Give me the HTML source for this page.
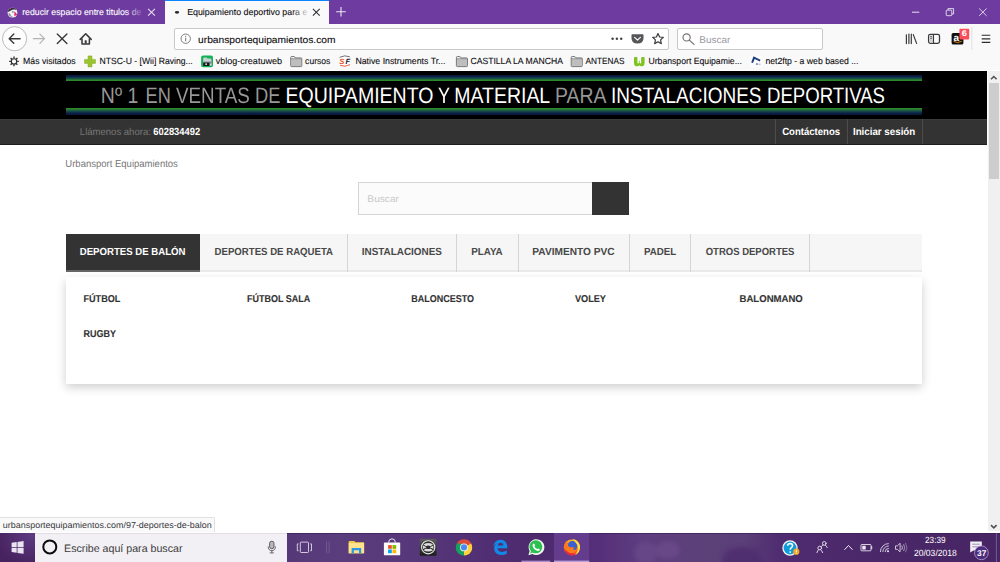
<!DOCTYPE html>
<html>
<head>
<meta charset="utf-8">
<title>Equipamiento deportivo</title>
<style>
*{box-sizing:border-box;margin:0;padding:0}
html,body{width:1000px;height:562px;overflow:hidden;background:#fff;font-family:"Liberation Sans",sans-serif;}
body{position:relative}
.a{position:absolute}
.t{position:absolute;white-space:nowrap;text-rendering:geometricPrecision}
.hv{-webkit-text-stroke:0.1px currentColor}
.hb{-webkit-text-stroke:0.12px currentColor}
svg{position:absolute;overflow:visible;text-rendering:geometricPrecision}
/* ---------- browser chrome ---------- */
#tabbar{left:0;top:0;width:1000px;height:24px;background:#6e3ba0}
#tab2{left:164.8px;top:0;width:164.3px;height:24px;background:#f9f9fa;border-top:1.7px solid #0a84ff}
#navbar{left:0;top:24px;width:1000px;height:28px;background:#f9f9fa}
#urlbar{left:174px;top:28px;width:495px;height:22px;background:#fff;border:1px solid #c9c9cc;border-radius:2px}
#srchbar{left:677px;top:28px;width:146px;height:22px;background:#fff;border:1px solid #c9c9cc;border-radius:2px}
#bmbar{left:0;top:52px;width:1000px;height:19px;background:#f9f9fa;border-bottom:1.1px solid #fff}
/* ---------- page ---------- */
#banner{left:0;top:70.9px;width:987.4px;height:48px;background:#000}
.stripe{left:66px;width:856px;height:7px}
#topbar{left:0;top:118.8px;width:987.4px;height:26.6px;background:#333;border-top:1px solid #3b3b3b;border-bottom:1.4px solid #1e1e1e}
.vsep{top:118.8px;width:1px;height:25.2px;background:#4c4c4c}
#scroll{left:988.3px;top:70.7px;width:11.7px;height:460px;background:#f0f0f0}
#thumb{left:989.3px;top:83.2px;width:9.7px;height:96.3px;background:#cdcdcd}
#sinput{left:358px;top:182px;width:235px;height:33px;background:#fbfbfb;border:1px solid #d6d4d4}
#sbtn{left:592px;top:182px;width:37px;height:33px;background:#333}
#menu{left:66px;top:233.8px;width:856px;height:38px;background:#f6f6f6;border-bottom:2.2px solid #e9e9e9}
#menu1{left:66px;top:233.8px;width:134px;height:38px;background:#333;border-bottom:2.2px solid #666}
.msep{top:233.8px;width:1px;height:38px;background:#d6d4d4}
#submenu{left:66px;top:276.5px;width:856px;height:107.4px;background:#fff;box-shadow:0 3.7px 9.5px rgba(0,0,0,.2)}
/* ---------- status + taskbar ---------- */
#status{left:0;top:517px;width:215px;height:15.4px;background:#f9f9fa;border-top:1px solid #e0e0e3;border-right:1px solid #e0e0e3;border-top-right-radius:2px}
#taskbar{left:0;top:533px;width:1000px;height:29px;background:#4b2769}
#cortana{left:35px;top:533px;width:252px;height:29px;background:#f1eff4}
</style>
</head>
<body>
<!-- TAB BAR -->
<div id="tabbar" class="a"></div>
<div id="tab2" class="a"></div>
<!-- NAV BAR -->
<div id="navbar" class="a"></div>
<div id="urlbar" class="a"></div>
<div id="srchbar" class="a"></div>
<!-- BOOKMARKS -->
<div id="bmbar" class="a"></div>
<!--CHROMEICONS--><svg class="a" style="left:0;top:0" width="1000" height="72" viewBox="0 0 1000 72">
 <!-- tab1 favicon (puffin) -->
 <g>
  <circle cx="12.5" cy="12.7" r="4.9" fill="#f4f2f6"/>
  <path d="M7.7 12 A4.9 4.9 0 0 1 16.6 10 Q13.5 8.6 11 10.4 Q9 11.6 7.7 12Z" fill="#3a3340"/>
  <path d="M14.3 11.2 L17.3 14.6 L14.4 16.2Z" fill="#e8245e"/>
  <path d="M8.2 13.5 Q9.5 17.6 13.4 17.3 Q10.6 16.4 9.8 13.2Z" fill="#8b8791"/>
  <circle cx="12.9" cy="11.9" r="0.7" fill="#333"/>
 </g>
 <!-- tab1 fade -->
 <defs><linearGradient id="fd1" x1="0" x2="1"><stop offset="0" stop-color="#6e3ba0" stop-opacity="0"/><stop offset="1" stop-color="#6e3ba0" stop-opacity=".85"/></linearGradient>
 <linearGradient id="fd2" x1="0" x2="1"><stop offset="0" stop-color="#f9f9fa" stop-opacity="0"/><stop offset="1" stop-color="#f9f9fa" stop-opacity=".9"/></linearGradient></defs>
 <!-- tab close buttons -->
 <path d="M148.1 8.9 L154.9 15.7 M154.9 8.9 L148.1 15.7" stroke="#e6def0" stroke-width="1.05" fill="none"/>
 <path d="M312.9 8.9 L319.7 15.7 M319.7 8.9 L312.9 15.7" stroke="#2d2d2f" stroke-width="1.05" fill="none"/>
 <!-- loading dot -->
 <ellipse cx="177" cy="12.3" rx="2.2" ry="1.4" fill="#2a2a2e"/>
 <!-- new tab plus -->
 <path d="M336.2 11.8 H345.8 M341 7 V16.6" stroke="#ece6f3" stroke-width="1.1" fill="none"/>
 <!-- window controls -->
 <path d="M912 12.2 H919.3" stroke="#e9e2f1" stroke-width="1" fill="none"/>
 <rect x="946.2" y="10.1" width="5.6" height="5.6" rx="0.8" fill="none" stroke="#e9e2f1" stroke-width="0.9"/>
 <path d="M948 10.1 V8.6 H953.6 V14 H951.8" fill="none" stroke="#e9e2f1" stroke-width="0.9"/>
 <path d="M979.2 8.5 L986.6 15.9 M986.6 8.5 L979.2 15.9" stroke="#e9e2f1" stroke-width="0.9" fill="none"/>
 <!-- back -->
 <circle cx="14.6" cy="38.7" r="12.1" fill="#fdfdfd" stroke="#b3b3b6" stroke-width="0.9"/>
 <path d="M20.1 38.7 H9.4 M13.8 34.1 L9.2 38.7 L13.8 43.3" stroke="#3a3a3d" stroke-width="1.4" fill="none" stroke-linecap="round" stroke-linejoin="round"/>
 <!-- forward -->
 <path d="M33.4 38.7 H44.3 M39.9 34.1 L44.5 38.7 L39.9 43.3" stroke="#b4b4b7" stroke-width="1.2" fill="none" stroke-linecap="round" stroke-linejoin="round"/>
 <!-- stop X -->
 <path d="M57.3 33.9 L66.9 43.5 M66.9 33.9 L57.3 43.5" stroke="#3a3a3d" stroke-width="1.4" fill="none" stroke-linecap="round"/>
 <!-- home -->
 <path d="M80.2 39.4 L85.7 33.7 L91.2 39.4" stroke="#3a3a3d" stroke-width="1.55" fill="none" stroke-linecap="round" stroke-linejoin="round"/>
 <path d="M82 38.6 V44 H89.4 V38.6" stroke="#3a3a3d" stroke-width="1.55" fill="none" stroke-linejoin="round"/>
 <rect x="84.7" y="40.3" width="2" height="3.2" fill="#3a3a3d"/>
 <!-- info -->
 <circle cx="185.7" cy="38.7" r="4.7" fill="none" stroke="#6f6f73" stroke-width="0.9"/>
 <rect x="185.2" y="37.7" width="1" height="3.6" fill="#6f6f73"/><rect x="185.2" y="35.8" width="1" height="1.1" fill="#6f6f73"/>
 <!-- page actions dots -->
 <circle cx="612.6" cy="38.8" r="1.25" fill="#45454a"/><circle cx="616.9" cy="38.8" r="1.25" fill="#45454a"/><circle cx="621.2" cy="38.8" r="1.25" fill="#45454a"/>
 <!-- pocket -->
 <path d="M632.2 34.3 H642.8 Q643.5 34.3 643.5 35 V38 Q643.5 43.6 637.5 43.6 Q631.5 43.6 631.5 38 V35 Q631.5 34.3 632.2 34.3Z" fill="#55555a"/>
 <path d="M634.6 37.4 L637.5 40.2 L640.4 37.4" stroke="#fff" stroke-width="1.15" fill="none" stroke-linecap="round" stroke-linejoin="round"/>
 <!-- star -->
 <path d="M658 33.6 L659.6 37 L663.3 37.4 L660.6 39.9 L661.3 43.6 L658 41.8 L654.7 43.6 L655.4 39.9 L652.7 37.4 L656.4 37Z" fill="none" stroke="#3a3a3d" stroke-width="1.2" stroke-linejoin="round"/>
 <!-- search magnifier -->
 <circle cx="686.6" cy="37.4" r="3.6" fill="none" stroke="#727276" stroke-width="1.15"/>
 <path d="M689.3 40.1 L694 44.4" stroke="#727276" stroke-width="1.25" stroke-linecap="round"/>
 <!-- library -->
 <path d="M906.4 34.8 V43.6 M908.9 34 V43.6 M911.3 34 V43.6 M913.3 34.6 L916.6 43.4" stroke="#3a3a3d" stroke-width="1.2" fill="none" stroke-linecap="round"/>
 <!-- sidebar -->
 <rect x="928.6" y="34.3" width="10.9" height="9" rx="1.7" fill="none" stroke="#3a3a3d" stroke-width="1.3"/><rect x="929.6" y="35.3" width="3.6" height="7" fill="#d4d4d6"/>
 <path d="M933.5 34.4 V43.2" stroke="#3a3a3d" stroke-width="1.1"/><path d="M930.2 36.6 H932 M930.2 38.3 H932" stroke="#3a3a3d" stroke-width="0.7"/>
 <!-- amazon -->
 <rect x="951.6" y="33" width="11.8" height="11.6" rx="1.6" fill="#111"/>
 <path d="M954 41.6 Q957.6 43.7 961.4 41.5" stroke="#f90" stroke-width="0.9" fill="none" stroke-linecap="round"/>
 <text x="953.6" y="41.2" font-family="Liberation Sans" font-weight="700" font-size="10" fill="#fff">a</text>
 <rect x="959.4" y="28.7" width="9.8" height="10.7" rx="0.8" fill="#fb4d5b"/>
 <!-- separator + hamburger -->
 <path d="M971.8 27 V50" stroke="#dcdcde" stroke-width="0.8"/>
 <path d="M981.7 35.2 H990.3 M981.7 38.8 H990.3 M981.7 42.4 H990.3" stroke="#2d2d30" stroke-width="1.15" fill="none"/>
 <!-- bookmarks icons -->
 <!-- gear -->
 <g stroke="#2c2c2f" fill="none">
  <circle cx="14" cy="61.4" r="2.7" stroke-width="1.15"/>
  <path d="M14 56.6 V58.3 M14 64.5 V66.2 M9.2 61.4 H10.9 M17.1 61.4 H18.8 M10.6 58 L11.8 59.2 M16.2 63.6 L17.4 64.8 M17.4 58 L16.2 59.2 M11.8 63.6 L10.6 64.8" stroke-width="1.35"/>
 </g>
 <!-- green plus -->
 <path d="M88 55.9 H92 V59.4 H95.5 V63.4 H92 V66.9 H88 V63.4 H84.5 V59.4 H88Z" fill="#9cc332" stroke="#86ab25" stroke-width="0.5" stroke-linejoin="round"/>
 <!-- vblog icon -->
 <rect x="201.1" y="55.5" width="11.9" height="11.8" rx="2" fill="#14b257"/>
 <path d="M203.2 58.2 Q203.2 57.4 204 57.4 H206.6 L207.6 58.4 H210.6 Q211.4 58.4 211.4 59.2 V65.4 H203.2Z" fill="#c9d0d6"/>
 <path d="M203.2 61.6 H211.4 V65.4 H203.2Z" fill="#7f878d"/>
 <path d="M203.2 62.6 H209.4 V66 H203.2Z" fill="#16181a"/>
 <rect x="205.3" y="63.4" width="1.7" height="1.5" fill="#dfe6ea"/>
 <rect x="210.2" y="63.6" width="1.2" height="1.8" fill="#f0f3f5"/>
 <!-- folders -->
 <g transform="translate(290.3 56.1)"><path d="M.4 1.4 Q.4 .4 1.4 .4 H3.6 Q4.2 .4 4.6 1 L5.2 1.8 H10.6 Q11.5 1.8 11.5 2.7 V9.6 Q11.5 10.5 10.6 10.5 H1.3 Q.4 10.5 .4 9.6Z" fill="#c8c8c8" stroke="#686868" stroke-width="0.85"/><path d="M1 1.4 H3.8" stroke="#f2f2f2" stroke-width="0.9"/><path d="M.6 2.9 H11.3" stroke="#6e6e6e" stroke-width="0.6"/><rect x="1.2" y="3.4" width="9.6" height="6.4" fill="#bebebe"/></g>
 <g transform="translate(456.0 56.1)"><path d="M.4 1.4 Q.4 .4 1.4 .4 H3.6 Q4.2 .4 4.6 1 L5.2 1.8 H10.6 Q11.5 1.8 11.5 2.7 V9.6 Q11.5 10.5 10.6 10.5 H1.3 Q.4 10.5 .4 9.6Z" fill="#c8c8c8" stroke="#686868" stroke-width="0.85"/><path d="M1 1.4 H3.8" stroke="#f2f2f2" stroke-width="0.9"/><path d="M.6 2.9 H11.3" stroke="#6e6e6e" stroke-width="0.6"/><rect x="1.2" y="3.4" width="9.6" height="6.4" fill="#bebebe"/></g>
 <g transform="translate(570.8 56.1)"><path d="M.4 1.4 Q.4 .4 1.4 .4 H3.6 Q4.2 .4 4.6 1 L5.2 1.8 H10.6 Q11.5 1.8 11.5 2.7 V9.6 Q11.5 10.5 10.6 10.5 H1.3 Q.4 10.5 .4 9.6Z" fill="#c8c8c8" stroke="#686868" stroke-width="0.85"/><path d="M1 1.4 H3.8" stroke="#f2f2f2" stroke-width="0.9"/><path d="M.6 2.9 H11.3" stroke="#6e6e6e" stroke-width="0.6"/><rect x="1.2" y="3.4" width="9.6" height="6.4" fill="#bebebe"/></g>
 <!-- SF icon -->
 <circle cx="344.8" cy="61.2" r="6" fill="#fff"/>
 <text x="339.3" y="63.8" font-family="Liberation Sans" font-style="italic" font-weight="700" font-size="7.6" fill="#e8502a">S</text>
 <text x="345.6" y="63.8" font-family="Liberation Sans" font-style="italic" font-weight="700" font-size="7.6" fill="#222226">F</text>
 <path d="M339.6 57.4 Q344.6 54.6 349.8 56.8" stroke="#4a4a4a" stroke-width="0.8" fill="none"/>
 <path d="M340 65.2 Q345 67.6 350 64.6" stroke="#e8502a" stroke-width="0.9" fill="none"/>
 <!-- urbansport icon -->
 <path d="M634 57.8 Q634 57 634.8 57 H636.6 Q637.4 57 637.4 57.8 V62.2 Q637.4 63.5 638.2 63.5 Q638.9 63.5 638.9 62.4 V60.8 H639.7 V62.4 Q639.7 63.5 640.4 63.5 Q641.2 63.5 641.2 62.2 V57.8 Q641.2 57 642 57 H643.8 Q644.6 57 644.6 57.8 V62.4 Q644.6 66.3 641.4 66.3 Q639.9 66.3 639.3 65.3 Q638.7 66.3 637.2 66.3 Q634 66.3 634 62.4Z" fill="#7ec41f"/>
 <!-- net2ftp icon -->
 <rect x="750.6" y="55.8" width="11" height="11.4" fill="#fdfdfe"/>
 <path d="M751.2 62.5 L753.5 56.3 L760.5 59.7 L759.9 61.4 L754.7 58.9 L753 63.1Z" fill="#1f3f7d"/>
 <path d="M756.3 62.9 L758.7 64.1 L756.3 65.3Z" fill="#3f69a8"/>
 <rect x="758.9" y="63.5" width="1.7" height="1.6" fill="#c3c7cf"/>
</svg>
<!--/CHROMEICONS-->
<!-- PAGE -->
<div id="banner" class="a"></div>
<div class="a stripe" style="top:74.5px;height:6.7px;background:linear-gradient(to bottom,#071634 0%,#0a2048 25%,#164a4a 55%,#2a842b 85%,#2f8f2c 100%)"></div>
<div class="a stripe" style="top:107.8px;height:7.1px;background:linear-gradient(to bottom,#2f8f2c 0%,#2a842b 15%,#164a4a 45%,#0a2048 75%,#071634 100%)"></div>
<div id="topbar" class="a"></div>
<div class="a vsep" style="left:774.5px"></div>
<div class="a vsep" style="left:847.2px"></div>
<div class="a vsep" style="left:922.2px"></div>
<div id="scroll" class="a"></div>
<div id="thumb" class="a"></div>
<div id="sinput" class="a"></div>
<div id="sbtn" class="a"></div>
<div id="menu" class="a"></div>
<div id="menu1" class="a"></div>
<div class="a msep" style="left:347.2px"></div>
<div class="a msep" style="left:456px"></div>
<div class="a msep" style="left:517.8px"></div>
<div class="a msep" style="left:628.9px"></div>
<div class="a msep" style="left:690.3px"></div>
<div class="a msep" style="left:809px"></div>
<div id="submenu" class="a"></div>
<!-- STATUS + TASKBAR -->
<div id="status" class="a"></div>
<!--TASKICONS--><svg class="a" style="left:0;top:533px" width="1000" height="29" viewBox="0 533 1000 29">
 <defs>
  <linearGradient id="tbg" x1="0" x2="1" y1="0" y2="0">
   <stop offset="0" stop-color="#4a2668"/><stop offset=".287" stop-color="#553878"/><stop offset=".34" stop-color="#5a3d7c"/><stop offset=".42" stop-color="#56377a"/><stop offset=".50" stop-color="#4f2d70"/><stop offset=".54" stop-color="#4c2a6c"/><stop offset=".60" stop-color="#562f7a"/><stop offset=".64" stop-color="#5e3d80"/><stop offset=".70" stop-color="#5c4179"/><stop offset=".745" stop-color="#5a3f78"/><stop offset=".78" stop-color="#4f2c70"/><stop offset=".86" stop-color="#4b2869"/><stop offset="1" stop-color="#472463"/>
  </linearGradient>
  <filter id="bl" x="-30%" y="-30%" width="160%" height="160%"><feGaussianBlur stdDeviation="2.2"/></filter>
  <radialGradient id="stg" cx=".9" cy=".1" r="1"><stop offset="0" stop-color="#5d3a82"/><stop offset="1" stop-color="#47235f"/></radialGradient>
  <linearGradient id="dk" x1="0" x2="0" y1="0" y2="1"><stop offset="0" stop-color="#5e5e5e"/><stop offset="1" stop-color="#1c1c1c"/></linearGradient>
  <linearGradient id="ffg" x1="0" x2="0" y1="0" y2="1"><stop offset="0" stop-color="#ffb52a"/><stop offset=".5" stop-color="#ff7c1a"/><stop offset="1" stop-color="#ee3a3a"/></linearGradient>
 </defs>
 <rect x="0" y="533" width="1000" height="29" fill="url(#tbg)"/>
 <g filter="url(#bl)" opacity=".75"><ellipse cx="646" cy="553" rx="11" ry="11" fill="#6b4a8a"/><ellipse cx="668" cy="550" rx="12" ry="9" fill="#6d4c8c"/><ellipse cx="742" cy="560" rx="20" ry="13" fill="#4e2c6e"/></g>
 <rect x="0" y="533" width="1000" height="1" fill="#3d1d58" opacity=".7"/>
 <!-- start -->
 <rect x="0" y="533" width="35" height="29" fill="url(#stg)"/>
 <g fill="#ebe5f1">
  <path d="M11.6 542.7 L16.7 542 V547 H11.6Z"/><path d="M17.5 541.9 L23.6 541 V547 H17.5Z"/>
  <path d="M11.6 547.8 H16.7 V552.8 L11.6 552.1Z"/><path d="M17.5 547.8 H23.6 V553.8 L17.5 552.9Z"/>
 </g>
 <!-- cortana box -->
 <rect x="35" y="533" width="252" height="29" fill="#f2f0f5"/>
 <rect x="35" y="533" width="252" height="0.8" fill="#dcd8e2"/>
 <circle cx="49.8" cy="546.9" r="6.5" fill="none" stroke="#0c0c0c" stroke-width="2"/>
 <!-- mic -->
 <rect x="269.6" y="541.2" width="4.4" height="7.6" rx="2.2" fill="#b9b7bd" stroke="#4e4e52" stroke-width="0.9"/>
 <path d="M268.2 546.4 Q268.2 550.7 271.8 550.7 Q275.4 550.7 275.4 546.4 M271.8 550.7 V552.7 M269.8 552.9 H273.8" stroke="#4e4e52" stroke-width="0.85" fill="none"/>
 <!-- task view -->
 <rect x="300.3" y="542.1" width="8.2" height="10.4" rx="0.8" fill="none" stroke="#e8e2ef" stroke-width="0.85"/>
 <path d="M298.6 543.9 H297.3 V550.7 H298.6 M310.2 543.9 H311.5 V550.7 H310.2" fill="none" stroke="#e8e2ef" stroke-width="0.85"/>
 <path d="M326.6 541.2 V553.2 M329.2 541.2 V553.2" stroke="#7a5f98" stroke-width="0.8"/>
 <!-- explorer -->
 <path d="M348.7 541.6 Q348.7 540.9 349.4 540.9 H354.4 L355.4 542.2 H363.4 Q364.1 542.2 364.1 542.9 V553.3 H348.7Z" fill="#f7c846"/>
 <rect x="348.7" y="542.9" width="15.4" height="10.4" fill="#ffe28c"/>
 <path d="M351.6 553.3 V548.1 H361.2 V553.3 H358.9 V550.3 H353.9 V553.3Z" fill="#2a98e6"/>
 <!-- store -->
 <path d="M388.6 542.6 Q388.6 538.8 392 538.8 Q395.4 538.8 395.4 542.6" fill="none" stroke="#e9e4ef" stroke-width="1"/>
 <rect x="383.9" y="542.5" width="16.3" height="12.8" rx="0.9" fill="#fbfafc"/>
 <rect x="388.1" y="545.1" width="3.7" height="3.7" fill="#f25022"/><rect x="392.5" y="545.1" width="3.7" height="3.7" fill="#7fba00"/>
 <rect x="388.1" y="549.5" width="3.7" height="3.7" fill="#00a4ef"/><rect x="392.5" y="549.5" width="3.7" height="3.7" fill="#ffb900"/>
 <!-- dark round app -->
 <rect x="419.8" y="538.7" width="16.8" height="17" rx="1.2" fill="url(#dk)"/>
 <circle cx="428.2" cy="547.3" r="6.6" fill="#2a2a2a" stroke="#e8e8e8" stroke-width="1.1"/>
 <path d="M423.4 544.4 Q428.2 541.6 433 544.4 L430.4 546.2 Q428.2 545 426 546.2Z M423.4 550.2 Q428.2 553 433 550.2 L430.4 548.4 Q428.2 549.6 426 548.4Z" fill="#dcdcdc"/>
 <path d="M423 545.6 L426.6 547.3 L423 549Z M433.4 545.6 L429.8 547.3 L433.4 549Z" fill="#dcdcdc"/>
 <!-- chrome -->
 <path d="M464 547.4 L456.9 543.3 A8.2 8.2 0 0 1 471.1 543.3 L468 547.4Z" fill="#dd4b3a"/>
 <path d="M464 547.4 L471.1 543.3 A8.2 8.2 0 0 1 464 555.6 L462 550.8Z" fill="#fdd23b"/>
 <path d="M464 547.4 L464 555.6 A8.2 8.2 0 0 1 456.9 543.3 L462 544Z" fill="#16a05d"/>
 <path d="M464 547.4 L471.1 543.3 L466 543.4Z" fill="#dd4b3a"/>
 <circle cx="464" cy="547.4" r="3.9" fill="#f4f4f4"/><circle cx="464" cy="547.4" r="3.05" fill="#4a8af4"/>
 <!-- edge -->
 <path d="M493.4 546.6 Q494 540 500.6 539.7 Q507.3 539.7 507.4 548.3 H497.6 Q497.9 551.8 501.8 551.9 Q504.4 551.9 506.8 550.6 V553.8 Q504.4 555.1 501.2 555.1 Q494.4 555 494.1 548.3 Q494.3 544.6 497.4 543 Q494.6 543.6 493.4 546.6Z M497.7 545.6 H503.4 Q503.3 542.8 500.6 542.7 Q498.1 542.8 497.7 545.6Z" fill="#1488e6" fill-rule="evenodd"/>
 <!-- whatsapp -->
 <path d="M528.4 555.2 L529.6 551 A7.9 7.9 0 1 1 532.4 553.9Z" fill="#f4f4f4"/>
 <circle cx="535.8" cy="546.8" r="6.5" fill="#2cc04f"/>
 <path d="M530.2 553.5 L531 550.8 L532.9 552.6Z" fill="#2cc04f"/>
 <path d="M533 543.9 Q533.7 543 534.4 543.9 L535 545.3 Q535 545.8 534.4 546.3 Q535.3 548.2 537.2 549 Q537.8 548.3 538.3 548.4 L539.6 549.2 Q540.2 549.8 539.4 550.5 Q538.2 551.4 536.4 550.6 Q533.4 549.2 532.6 546.2 Q532.3 544.8 533 543.9Z" fill="#fff"/>
 <rect x="521.4" y="560.6" width="28.8" height="1.4" fill="#a88fc9"/>
 <!-- firefox (active) -->
 <rect x="554" y="533" width="35.2" height="29" fill="#633c8d"/>
 <rect x="554" y="560.6" width="35.2" height="1.4" fill="#b7a0d6"/>
 <circle cx="571.8" cy="547.4" r="8" fill="url(#ffg)"/>
 <circle cx="572.4" cy="545.9" r="4.9" fill="#3a5fd2"/>
 <path d="M564.4 545 Q565 542.2 566.6 540.7 Q567 542 567.9 542.6 Q568.2 544.6 568.2 546 Q569.6 547.6 572 547.3 Q573.6 547.2 574.8 547.8 Q573.2 548.5 573 549.5 Q574.8 550.4 576.8 549.2 Q576 552.8 572 553 Q567 553 565 549.4 Q564.2 547.2 564.4 545Z" fill="#ff7a1a"/>
 <path d="M572.6 538.9 Q577.6 539.6 579.5 544 Q581 548.2 578.6 552.2 Q577 554.6 574.2 555.3 Q577.8 552.4 577.9 548 Q577.8 544.6 575.6 542.6 Q574.2 540.6 572.6 538.9Z" fill="#ffdd3c"/>
 <path d="M564 548 Q565.2 554.6 571.8 555.4 Q575 555.4 577 553.4 Q572.6 555 568.6 552.6 Q565.4 550.6 564 548Z" fill="#e3293c"/>
 <!-- help -->
 <circle cx="790" cy="548" r="7.7" fill="#f6f6f8"/><circle cx="790" cy="548" r="6.4" fill="#0f9bd9"/>
 <path d="M787.6 545.8 Q787.7 543.4 790.1 543.4 Q792.6 543.5 792.6 545.6 Q792.6 546.9 791.2 547.8 Q790.2 548.5 790.2 549.8" fill="none" stroke="#fff" stroke-width="1.5"/>
 <circle cx="790.2" cy="552.1" r="0.95" fill="#fff"/>
 <circle cx="796.3" cy="551.7" r="3.1" fill="#f4a81d"/><rect x="795.85" y="549.8" width="0.9" height="2.5" fill="#fff"/><rect x="795.85" y="552.8" width="0.9" height="0.9" fill="#fff"/>
 <!-- people -->
 <g fill="none" stroke="#ece7f2" stroke-width="0.9" stroke-linecap="round">
  <circle cx="824.3" cy="543.4" r="1.85"/><path d="M825.4 545.2 Q826.6 545.8 827.2 547.5 M823 545 Q821.8 545.6 821.4 546.4"/>
  <circle cx="819.7" cy="548" r="1.85"/><path d="M818.6 549.8 Q817.4 550.6 816.9 552.6 M820.8 549.8 Q822 550.6 822.6 552.6"/>
 </g>
 <!-- chevron -->
 <path d="M844.4 549.8 L848.5 545.5 L852.6 549.8" fill="none" stroke="#efeaf4" stroke-width="1"/>
 <!-- battery -->
 <rect x="861" y="544.5" width="10" height="6.3" rx="0.6" fill="none" stroke="#efeaf4" stroke-width="0.85"/>
 <rect x="871.2" y="546.3" width="1" height="2.7" fill="#efeaf4"/><rect x="862.3" y="545.8" width="3.4" height="3.7" fill="#efeaf4"/>
 <!-- wifi -->
 <g fill="none" stroke="#d7cfe2" stroke-width="0.95">
  <path d="M880.4 552 A8.4 8.4 0 0 1 888.8 543.6"/><path d="M882.8 552 A6 6 0 0 1 888.8 546"/><path d="M885.2 552 A3.6 3.6 0 0 1 888.8 548.4"/>
 </g>
 <circle cx="888" cy="551.3" r="1" fill="#efeaf4"/>
 <!-- volume -->
 <path d="M895.5 545.9 H897.3 L900.1 543.3 V551.9 L897.3 549.3 H895.5Z" fill="none" stroke="#efeaf4" stroke-width="0.8" stroke-linejoin="round"/>
 <path d="M901.8 545.6 Q903 547.6 901.8 549.6" fill="none" stroke="#efeaf4" stroke-width="0.75"/>
 <path d="M903.6 544.2 Q905.6 547.6 903.6 551" fill="none" stroke="#cfc5dc" stroke-width="0.7"/>
 <path d="M905.5 542.9 Q908.2 547.6 905.5 552.3" fill="none" stroke="#9f8fb6" stroke-width="0.7"/>
 <!-- action center -->
 <path d="M970.2 541.4 H981.8 V550.4 H973.4 L970.2 552.6Z" fill="#f3f0f6"/>
 <path d="M972.2 544.2 H979.8 M972.2 546.8 H979.8" stroke="#8b74ab" stroke-width="0.8"/>
 <circle cx="981.4" cy="552.8" r="6.9" fill="#4c2c7c" stroke="#b5a1d6" stroke-width="0.8"/>
 <path d="M996.4 533 V562" stroke="#8a74a6" stroke-width="0.7"/>
</svg>
<!--/TASKICONS-->
<div id="t_tab1" class="t hv" style="left:22px;top:7.95px;font-size:8.80px;line-height:1;color:#fff;transform-origin:0 50%;transform:translateX(0.13px) scaleX(0.9955);">reducir espacio entre titulos de</div>
<div id="t_tab2" class="t hv" style="left:187px;top:7.95px;font-size:8.80px;line-height:1;color:#0c0c0d;transform-origin:0 50%;transform:translateX(0.13px) scaleX(1.0037);">Equipamiento deportivo para e</div>
<div id="t_url" class="t hv" style="left:198px;top:35.79px;font-size:9.70px;line-height:1;color:#0c0c0d;transform-origin:0 50%;transform:translateX(0.07px) scaleX(1.0540);">urbansportequipamientos.com</div>
<div id="t_srch" class="t" style="left:699px;top:35.79px;font-size:9.70px;line-height:1;color:#9a9a9e;transform-origin:0 50%;transform:translateX(0.37px) scaleX(1.0302);">Buscar</div>
<div id="t_bm1" class="t hv" style="left:23px;top:56.88px;font-size:9.00px;line-height:1;color:#0c0c0d;transform-origin:0 50%;transform:translateX(0.11px) scaleX(0.9644);">Más visitados</div>
<div id="t_bm2" class="t hv" style="left:99px;top:56.88px;font-size:9.00px;line-height:1;color:#0c0c0d;transform-origin:0 50%;transform:translateX(0.42px) scaleX(0.9567);">NTSC-U - [Wii] Raving...</div>
<div id="t_bm3" class="t hv" style="left:215px;top:56.88px;font-size:9.00px;line-height:1;color:#0c0c0d;transform-origin:0 50%;transform:translateX(0.72px) scaleX(1.0037);">vblog-creatuweb</div>
<div id="t_bm4" class="t hv" style="left:305px;top:56.88px;font-size:9.00px;line-height:1;color:#0c0c0d;transform-origin:0 50%;transform:translateX(0.12px) scaleX(0.9538);">cursos</div>
<div id="t_bm5" class="t hv" style="left:355px;top:56.88px;font-size:9.00px;line-height:1;color:#0c0c0d;transform-origin:0 50%;transform:translateX(0.42px) scaleX(0.9725);">Native Instruments Tr...</div>
<div id="t_bm6" class="t hv" style="left:470px;top:56.88px;font-size:9.00px;line-height:1;color:#0c0c0d;transform-origin:0 50%;transform:translateX(0.42px) scaleX(0.9580);">CASTILLA LA MANCHA</div>
<div id="t_bm7" class="t hv" style="left:585px;top:56.88px;font-size:9.00px;line-height:1;color:#0c0c0d;transform-origin:0 50%;transform:translateX(0.41px) scaleX(0.9171);">ANTENAS</div>
<div id="t_bm8" class="t hv" style="left:648px;top:56.88px;font-size:9.00px;line-height:1;color:#0c0c0d;transform-origin:0 50%;transform:translateX(0.41px) scaleX(0.9632);">Urbansport Equipamie...</div>
<div id="t_bm9" class="t hv" style="left:765px;top:56.88px;font-size:9.00px;line-height:1;color:#0c0c0d;transform-origin:0 50%;transform:translateX(0.41px) scaleX(0.9630);">net2ftp - a web based ...</div>
<div id="t_b0" class="t" style="left:100px;top:85.32px;font-size:22.30px;line-height:1;color:#979797;transform-origin:0 50%;transform:translateX(0.83px) scaleX(0.8725);">Nº 1</div>
<div id="t_b2" class="t" style="left:145px;top:85.32px;font-size:22.30px;line-height:1;color:#979797;transform-origin:0 50%;transform:translateX(0.55px) scaleX(0.8150);">EN</div>
<div id="t_b3" class="t" style="left:176px;top:85.32px;font-size:22.30px;line-height:1;color:#979797;transform-origin:0 50%;transform:translateX(0.00px) scaleX(0.8429);">VENTAS</div>
<div id="t_b4" class="t" style="left:255px;top:85.32px;font-size:22.30px;line-height:1;color:#979797;transform-origin:0 50%;transform:translateX(0.05px) scaleX(0.8215);">DE</div>
<div id="t_b5" class="t" style="left:285px;top:85.32px;font-size:22.30px;line-height:1;color:#fff;transform-origin:0 50%;transform:translateX(0.55px) scaleX(0.8759);">EQUIPAMIENTO</div>
<div id="t_b6" class="t" style="left:438px;top:85.32px;font-size:22.30px;line-height:1;color:#fff;transform-origin:0 50%;transform:translateX(0.00px) scaleX(0.8067);">Y</div>
<div id="t_b7" class="t" style="left:454px;top:85.32px;font-size:22.30px;line-height:1;color:#fff;transform-origin:0 50%;transform:translateX(0.30px) scaleX(0.8730);">MATERIAL</div>
<div id="t_b8" class="t" style="left:555px;top:85.32px;font-size:22.30px;line-height:1;color:#979797;transform-origin:0 50%;transform:translateX(0.05px) scaleX(0.8709);">PARA</div>
<div id="t_b9" class="t" style="left:611px;top:85.32px;font-size:22.30px;line-height:1;color:#fff;transform-origin:0 50%;transform:translateX(0.05px) scaleX(0.8511);">INSTALACIONES</div>
<div id="t_b10" class="t" style="left:767px;top:85.32px;font-size:22.30px;line-height:1;color:#fff;transform-origin:0 50%;transform:translateX(0.05px) scaleX(0.8326);">DEPORTIVAS</div>
<div id="t_call" class="t" style="left:79px;top:128.14px;font-size:10.00px;line-height:1;color:#777;transform-origin:0 50%;transform:translateX(0.85px) scaleX(0.9530);">Llámenos ahora:</div>
<div id="t_tel" class="t" style="left:153px;top:127.88px;font-size:10.30px;line-height:1;color:#fff;font-weight:700;transform-origin:0 50%;transform:translateX(0.29px) scaleX(0.9084);">602834492</div>
<div id="t_cont" class="t" style="left:782px;top:127.88px;font-size:10.30px;line-height:1;color:#fff;font-weight:700;transform-origin:0 50%;transform:translateX(0.13px) scaleX(0.9304);">Contáctenos</div>
<div id="t_login" class="t" style="left:852px;top:127.88px;font-size:10.30px;line-height:1;color:#fff;font-weight:700;transform-origin:0 50%;transform:translateX(0.93px) scaleX(0.9469);">Iniciar sesión</div>
<div id="t_crumb" class="t" style="left:65px;top:159.65px;font-size:10.10px;line-height:1;color:#777;transform-origin:0 50%;transform:translateX(0.34px) scaleX(0.9414);">Urbansport Equipamientos</div>
<div id="t_find" class="t" style="left:367px;top:194.79px;font-size:9.70px;line-height:1;color:#c9c9c9;transform-origin:0 50%;transform:translateX(0.37px) scaleX(1.0468);">Buscar</div>
<div id="t_m1" class="t" style="left:79px;top:247.88px;font-size:10.30px;line-height:1;color:#fff;font-weight:700;transform-origin:0 50%;transform:translateX(0.73px) scaleX(0.9334);">DEPORTES DE BALÓN</div>
<div id="t_m2" class="t" style="left:214px;top:247.88px;font-size:10.30px;line-height:1;color:#484848;font-weight:700;transform-origin:0 50%;transform:translateX(0.53px) scaleX(0.9346);">DEPORTES DE RAQUETA</div>
<div id="t_m3" class="t" style="left:361px;top:247.88px;font-size:10.30px;line-height:1;color:#484848;font-weight:700;transform-origin:0 50%;transform:translateX(0.73px) scaleX(0.9615);">INSTALACIONES</div>
<div id="t_m4" class="t" style="left:471px;top:247.88px;font-size:10.30px;line-height:1;color:#484848;font-weight:700;transform-origin:0 50%;transform:translateX(0.13px) scaleX(0.9551);">PLAYA</div>
<div id="t_m5" class="t" style="left:532px;top:247.88px;font-size:10.30px;line-height:1;color:#484848;font-weight:700;transform-origin:0 50%;transform:translateX(0.33px) scaleX(0.9833);">PAVIMENTO PVC</div>
<div id="t_m6" class="t" style="left:643px;top:247.88px;font-size:10.30px;line-height:1;color:#484848;font-weight:700;transform-origin:0 50%;transform:translateX(0.93px) scaleX(0.9441);">PADEL</div>
<div id="t_m7" class="t" style="left:705px;top:247.88px;font-size:10.30px;line-height:1;color:#484848;font-weight:700;transform-origin:0 50%;transform:translateX(0.73px) scaleX(0.9231);">OTROS DEPORTES</div>
<div id="t_s1" class="t hb" style="left:83px;top:294.62px;font-size:9.90px;line-height:1;color:#333;font-weight:700;transform-origin:0 50%;transform:translateX(0.46px) scaleX(0.9236);">FÚTBOL</div>
<div id="t_s2" class="t hb" style="left:247px;top:294.62px;font-size:9.90px;line-height:1;color:#333;font-weight:700;transform-origin:0 50%;transform:translateX(0.06px) scaleX(0.9092);">FÚTBOL SALA</div>
<div id="t_s3" class="t hb" style="left:411px;top:294.62px;font-size:9.90px;line-height:1;color:#333;font-weight:700;transform-origin:0 50%;transform:translateX(0.36px) scaleX(0.9092);">BALONCESTO</div>
<div id="t_s4" class="t hb" style="left:574px;top:294.62px;font-size:9.90px;line-height:1;color:#333;font-weight:700;transform-origin:0 50%;transform:translateX(0.96px) scaleX(0.9255);">VOLEY</div>
<div id="t_s5" class="t hb" style="left:739px;top:294.62px;font-size:9.90px;line-height:1;color:#333;font-weight:700;transform-origin:0 50%;transform:translateX(0.56px) scaleX(0.9680);">BALONMANO</div>
<div id="t_s6" class="t hb" style="left:83px;top:329.62px;font-size:9.90px;line-height:1;color:#333;font-weight:700;transform-origin:0 50%;transform:translateX(0.46px) scaleX(0.9108);">RUGBY</div>
<div id="t_stat" class="t" style="left:2px;top:520.74px;font-size:8.70px;line-height:1;color:#38383d;transform-origin:0 50%;transform:translateX(0.73px) scaleX(1.0326);">urbansportequipamientos.com/97-deportes-de-balon</div>
<div id="t_cort" class="t" style="left:64px;top:544.06px;font-size:10.80px;line-height:1;color:#3a3a3a;transform-origin:0 50%;transform:translateX(0.10px) scaleX(0.9863);">Escribe aquí para buscar</div>
<div id="t_time" class="t" style="left:925px;top:535.78px;font-size:9.00px;line-height:1;color:#fff;transform-origin:0 50%;transform:translateX(0.03px) scaleX(0.9112);">23:39</div>
<div id="t_date" class="t" style="left:913px;top:548.68px;font-size:9.00px;line-height:1;color:#fff;transform-origin:0 50%;transform:translateX(0.93px) scaleX(0.9530);">20/03/2018</div>
<div id="t_n37" class="t" style="left:977px;top:548.57px;font-size:8.30px;line-height:1;color:#fff;font-weight:700;transform-origin:0 50%;transform:translateX(0.05px) scaleX(1.0050);">37</div>
<div id="t_badge" class="t" style="left:961px;top:30.26px;font-size:8.20px;line-height:1;color:#fff;font-weight:700;transform-origin:0 50%;transform:translateX(0.77px) scaleX(1.1402);">6</div>
<!--OVERLAY--><svg class="a" style="left:0;top:0" width="1000" height="562" viewBox="0 0 1000 562">
 <rect x="126" y="4" width="16" height="17" fill="url(#fd1)"/>
 <rect x="291" y="4" width="17" height="17" fill="url(#fd2)"/>
 <path d="M991 79.3 L993.8 76.5 L996.6 79.3" fill="none" stroke="#505050" stroke-width="1.5"/>
 <path d="M991 525.1 L993.8 527.9 L996.6 525.1" fill="none" stroke="#505050" stroke-width="1.5"/>
</svg><!--/OVERLAY-->
</body>
</html>
